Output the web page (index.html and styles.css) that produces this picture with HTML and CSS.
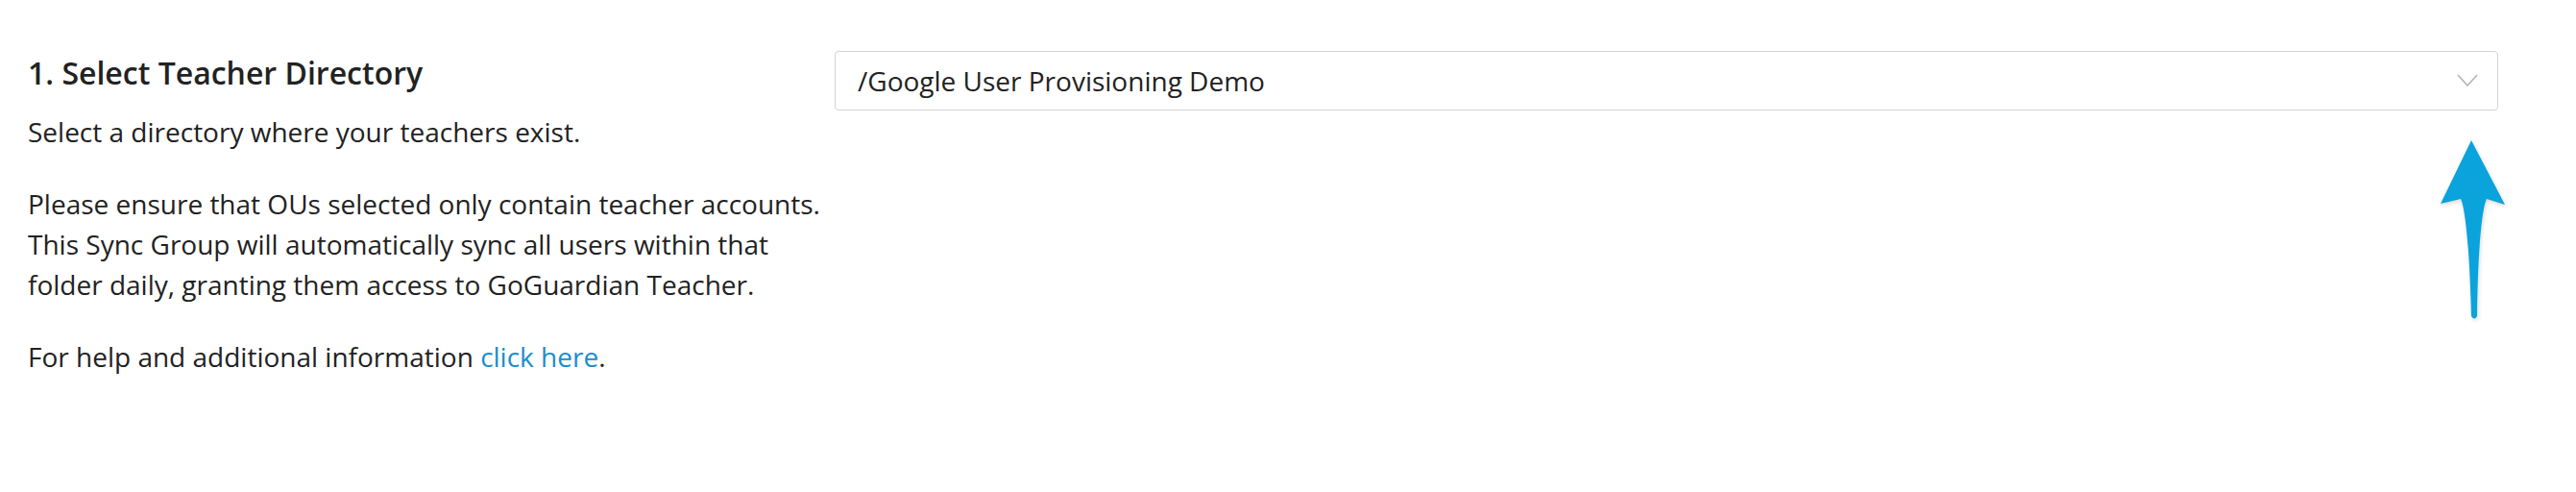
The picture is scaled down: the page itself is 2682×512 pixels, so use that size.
FILE: index.html
```html
<!DOCTYPE html>
<html lang="en">
<head>
  <meta charset="UTF-8">
  <title>Sync Group - Teacher Directory</title>
  <link rel="stylesheet" href="styles.css">
</head>
<body>
  <section class="step">
    <div class="step-info">
      <h2>1. Select Teacher Directory</h2>
      <p>Select a directory where your teachers exist.</p>
      <p>Please ensure that OUs selected only contain teacher accounts. This Sync Group will automatically sync all users within that folder daily, granting them access to GoGuardian Teacher.</p>
      <p>For help and additional information <a href="#">click here</a>.</p>
    </div>
    <div class="step-field">
      <div class="select">
        <span>/Google User Provisioning Demo</span>
        <svg class="chevron" width="22" height="14" viewBox="0 0 22 14"><path d="M1 1 L11 12 L21 1" fill="none" stroke="#b5b5b5" stroke-width="1.6"/></svg>
      </div>
      <div class="pointer">
        <svg width="80" height="200" viewBox="0 0 80 200">
          <path d="M38 6 L6 72 L27 67 C31 75 36 110 38 189 Q41 194 44 189 C45 110 50 75 54 67 L73 73 Z" fill="#0aa3dc"/>
        </svg>
      </div>
    </div>
  </section>
</body>
</html>
```

FILE: styles.css
```css
* { margin: 0; padding: 0; box-sizing: border-box; }
body { background: #fff; color: #222; font-family: 'Open Sans', 'Liberation Sans', sans-serif; }
.step { display: flex; padding: 53px 81px 0 29px; }
.step-info { width: 840px; flex-shrink: 0; }
.step-info h2 { font-size: 32px; font-weight: 600; line-height: 44px; margin-top: 1px; margin-bottom: 18px; }
.step-info p { font-size: 28px; line-height: 42px; margin-bottom: 33px; }
.step-info a { color: #1b8ecb; text-decoration: none; }
.step-field { flex: 1; }
.select { height: 62px; border: 1.5px solid #d4d4d4; border-radius: 4px; display: flex; align-items: center; justify-content: space-between; padding: 0 20px 0 23px; font-size: 28px; }
.pointer { display: flex; justify-content: flex-end; margin: 25px -14px 0 0; }
.pointer svg { filter: drop-shadow(1px 2px 2px rgba(0,0,0,0.15)); }
```
